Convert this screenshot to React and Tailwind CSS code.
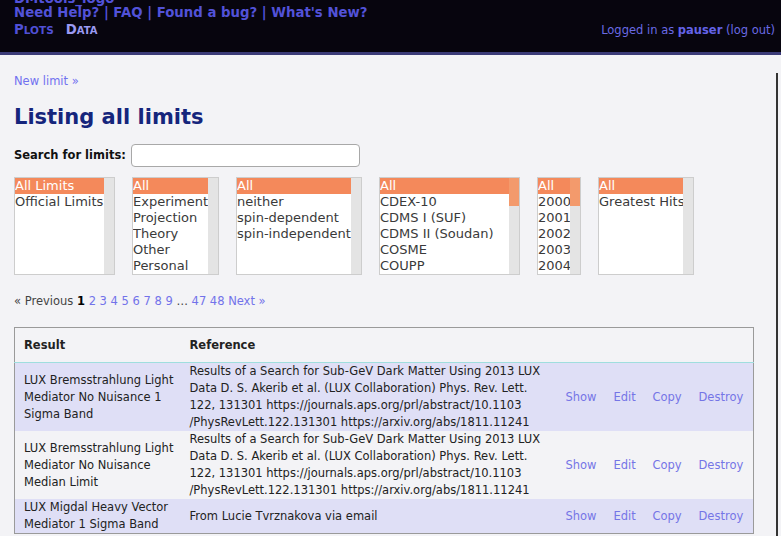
import React from 'react';

const font = { fontFamily: '"DejaVu Sans", Verdana, sans-serif' };

const ListBox = ({ width, items, thumb }) => (
  <div className={`flex h-[98px] border border-[#cdcdcd] bg-white ${width}`}>
    <div className="flex-1 overflow-hidden">
      {items.map((item, i) => (
        <div
          key={item}
          className={`h-4 whitespace-nowrap text-[13px] leading-4 ${i === 0 ? 'bg-[#f4895b] text-white' : 'text-[#3a3a3a]'}`}
        >
          {item}
        </div>
      ))}
    </div>
    <div className="w-[10px] bg-[#e4e4e4]">
      {thumb && <div className="h-[28px] bg-[#f39a6c]" />}
    </div>
  </div>
);

const rows = [
  {
    result: 'LUX Bremsstrahlung Light Mediator No Nuisance 1 Sigma Band',
    ref: true,
    shaded: true,
  },
  {
    result: 'LUX Bremsstrahlung Light Mediator No Nuisance Median Limit',
    ref: true,
    shaded: false,
  },
  {
    result: 'LUX Migdal Heavy Vector Mediator 1 Sigma Band',
    ref: false,
    shaded: true,
  },
];

const LuxReference = () => (
  <>
    Results of a Search for Sub-GeV Dark Matter Using 2013 LUX Data D. S. Akerib et al. (LUX
    Collaboration) Phys. Rev. Lett. 122, 131301 https://journals.aps.org/prl/abstract/10.1103
    <wbr />
    /PhysRevLett.122.131301 https://arxiv.org/abs/1811.11241
  </>
);

export default function App() {
  return (
    <div className="min-h-[536px] overflow-hidden bg-[#f3f3f6]" style={font}>
      {/* Header */}
      <div className="h-[55px] overflow-hidden border-b-[3px] border-[#3b3b78] bg-[#07050e] px-[14px]">
        <div className="-mt-[9px] text-[13.3px] font-bold leading-4 text-[#5252d8]">DMtools_logo</div>
        <div className="-mt-[2px] text-[13.3px] font-bold leading-4 text-[#5252d8]">
          Need Help? | FAQ | Found a bug? | What's New?
        </div>
        <div className="mt-[1px] flex items-baseline justify-between">
          <div className="flex gap-[12px] text-[13.3px] font-bold leading-4">
            <span className="text-[#5050d6]">
              P<span className="text-[10.5px]">LOTS</span>
            </span>
            <span className="text-[#9a9af2]">
              D<span className="text-[10px]">ATA</span>
            </span>
          </div>
          <div className="mr-[-8px] text-[11.5px] text-[#6a6ae4]">
            Logged in as <span className="font-bold text-[#6363e8]">pauser</span> (log out)
          </div>
        </div>
      </div>

      {/* Content */}
      <div className="mt-[18px] w-[778px] border-r-2 border-[#333] pb-10 pl-[14px]">
        <div className="text-[11.5px] leading-4 text-[#7171f0]">New limit »</div>

        <h1 className="mt-[15px] text-[21px] font-bold leading-[27px] text-[#15257c]">Listing all limits</h1>

        <div className="mt-[13px] flex items-center gap-[5px]">
          <span className="text-[11.5px] font-bold text-[#111]">Search for limits:</span>
          <div className="h-[23px] w-[229px] rounded-[4px] border border-[#a8a8a8] bg-white" />
        </div>

        <div className="mt-[10px] flex gap-[17px]">
          <ListBox width="w-[101px]" items={['All Limits', 'Official Limits']} />
          <ListBox
            width="w-[87px]"
            items={['All', 'Experiment', 'Projection', 'Theory', 'Other', 'Personal']}
          />
          <ListBox
            width="w-[126px]"
            items={['All', 'neither', 'spin-dependent', 'spin-independent']}
          />
          <ListBox
            width="w-[141px]"
            items={['All', 'CDEX-10', 'CDMS I (SUF)', 'CDMS II (Soudan)', 'COSME', 'COUPP']}
            thumb
          />
          <ListBox width="w-[44px]" items={['All', '2000', '2001', '2002', '2003', '2004']} thumb />
          <ListBox width="w-[96px]" items={['All', 'Greatest Hits']} />
        </div>

        <div className="mt-[19px] text-[11.5px] leading-[15px] text-[#444]">
          « Previous <span className="font-bold text-black">1</span>{' '}
          <span className="text-[#7272ea]">2 3 4 5 6 7 8 9</span> …{' '}
          <span className="text-[#7272ea]">47 48 Next »</span>
        </div>

        <table className="mt-[18px] w-[739px] table-fixed border-collapse border border-[#9a9a9a] text-[11.5px] leading-[17px] text-[#222]">
          <colgroup>
            <col className="w-[166px]" />
            <col className="w-[375px]" />
            <col className="w-[48px]" />
            <col className="w-[39px]" />
            <col className="w-[46px]" />
            <col className="w-[65px]" />
          </colgroup>
          <thead>
            <tr className="h-[35px] border-b border-[#9fdede]">
              <th className="pl-[9px] text-left font-bold">Result</th>
              <th className="pl-[9px] text-left font-bold">Reference</th>
              <th />
              <th />
              <th />
              <th />
            </tr>
          </thead>
          <tbody>
            {rows.map((r) => (
              <tr key={r.result} className={r.shaded ? 'bg-[#dfdff6]' : 'bg-[#f3f3f6]'}>
                <td className="py-0 pl-[9px] pr-[3px] align-middle">{r.result}</td>
                <td className="py-0 pl-[9px] pr-[13px] align-middle">
                  {r.ref ? <LuxReference /> : 'From Lucie Tvrznakova via email'}
                </td>
                <td className="pl-[10px] align-middle text-[#7575e6]">Show</td>
                <td className="pl-[10px] align-middle text-[#7575e6]">Edit</td>
                <td className="pl-[10px] align-middle text-[#7575e6]">Copy</td>
                <td className="pl-[10px] align-middle text-[#7575e6]">Destroy</td>
              </tr>
            ))}
          </tbody>
        </table>
      </div>
    </div>
  );
}
